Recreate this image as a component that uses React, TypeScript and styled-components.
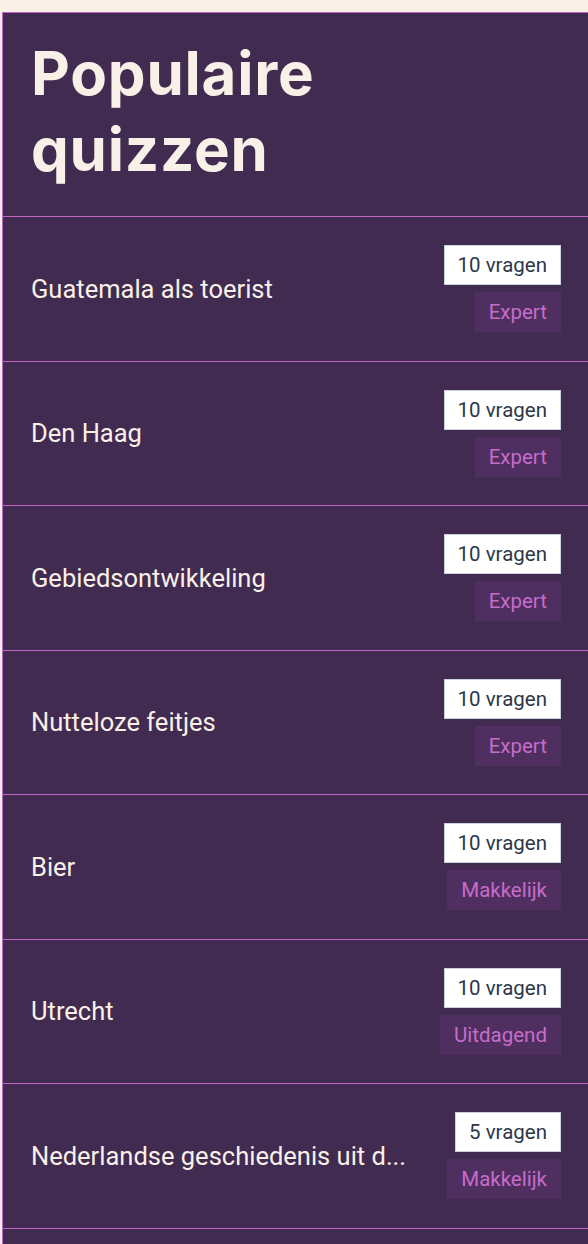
import styled, { createGlobalStyle } from 'styled-components'

const cream = '#f9f0e7'
const plum = '#422b51'
const orchid = '#c166c6'

const GlobalStyle = createGlobalStyle`
  html, body {
    margin: 0;
    padding: 0;
    background: ${cream};
    overflow: hidden;
  }
`

const Panel = styled.section`
  margin: 12px 0 0 2px;
  width: 588px;
  min-height: 1300px;
  background: ${plum};
  border: 1px solid ${orchid};
  box-sizing: border-box;
`

const Header = styled.header`
  padding: 22px 28px 29px;
  border-bottom: 1px solid ${orchid};
`

const Heading = styled.h1`
  margin: 0;
  font-family: Inter, 'Liberation Sans', sans-serif;
  font-weight: 700;
  font-size: 60px;
  line-height: 76px;
  letter-spacing: 0.8px;
  color: ${cream};
`

const QuizList = styled.ul`
  margin: 0;
  padding: 0;
  list-style: none;
`

const QuizRow = styled.li`
  display: flex;
  align-items: center;
  justify-content: space-between;
  padding: 28.28px 28px;
  border-bottom: 1px solid ${orchid};
`

const Title = styled.span`
  font-family: Roboto, 'Liberation Sans', sans-serif;
  font-size: 25.5px;
  color: ${cream};
  white-space: nowrap;
`

const Badges = styled.div`
  display: flex;
  flex-direction: column;
  align-items: flex-end;
  gap: 7px;
`

const Badge = styled.span<{ $variant: 'count' | 'level' }>`
  display: inline-block;
  box-sizing: border-box;
  height: 40px;
  padding: 6px 13px;
  font-family: Roboto, 'Liberation Sans', sans-serif;
  font-size: 20.5px;
  line-height: 26px;
  border: 1px solid
    ${({ $variant }) => ($variant === 'count' ? '#c9d2de' : 'transparent')};
  background: ${({ $variant }) => ($variant === 'count' ? '#ffffff' : '#4e2f5f')};
  color: ${({ $variant }) => ($variant === 'count' ? '#2d3748' : '#c76cca')};
`

const quizzes = [
  { title: 'Guatemala als toerist', questions: 10, level: 'Expert' },
  { title: 'Den Haag', questions: 10, level: 'Expert' },
  { title: 'Gebiedsontwikkeling', questions: 10, level: 'Expert' },
  { title: 'Nutteloze feitjes', questions: 10, level: 'Expert' },
  { title: 'Bier', questions: 10, level: 'Makkelijk' },
  { title: 'Utrecht', questions: 10, level: 'Uitdagend' },
  { title: 'Nederlandse geschiedenis uit de gouden eeuw', questions: 5, level: 'Makkelijk' },
]

const truncate = (text: string, max = 30) =>
  text.length > max ? `${text.slice(0, max)}...` : text

export default function App() {
  return (
    <>
      <GlobalStyle />
      <Panel>
        <Header>
          <Heading>
            Populaire
            <br />
            quizzen
          </Heading>
        </Header>
        <QuizList>
          {quizzes.map((quiz) => (
            <QuizRow key={quiz.title}>
              <Title>{truncate(quiz.title)}</Title>
              <Badges>
                <Badge $variant="count">{quiz.questions} vragen</Badge>
                <Badge $variant="level">{quiz.level}</Badge>
              </Badges>
            </QuizRow>
          ))}
        </QuizList>
      </Panel>
    </>
  )
}
